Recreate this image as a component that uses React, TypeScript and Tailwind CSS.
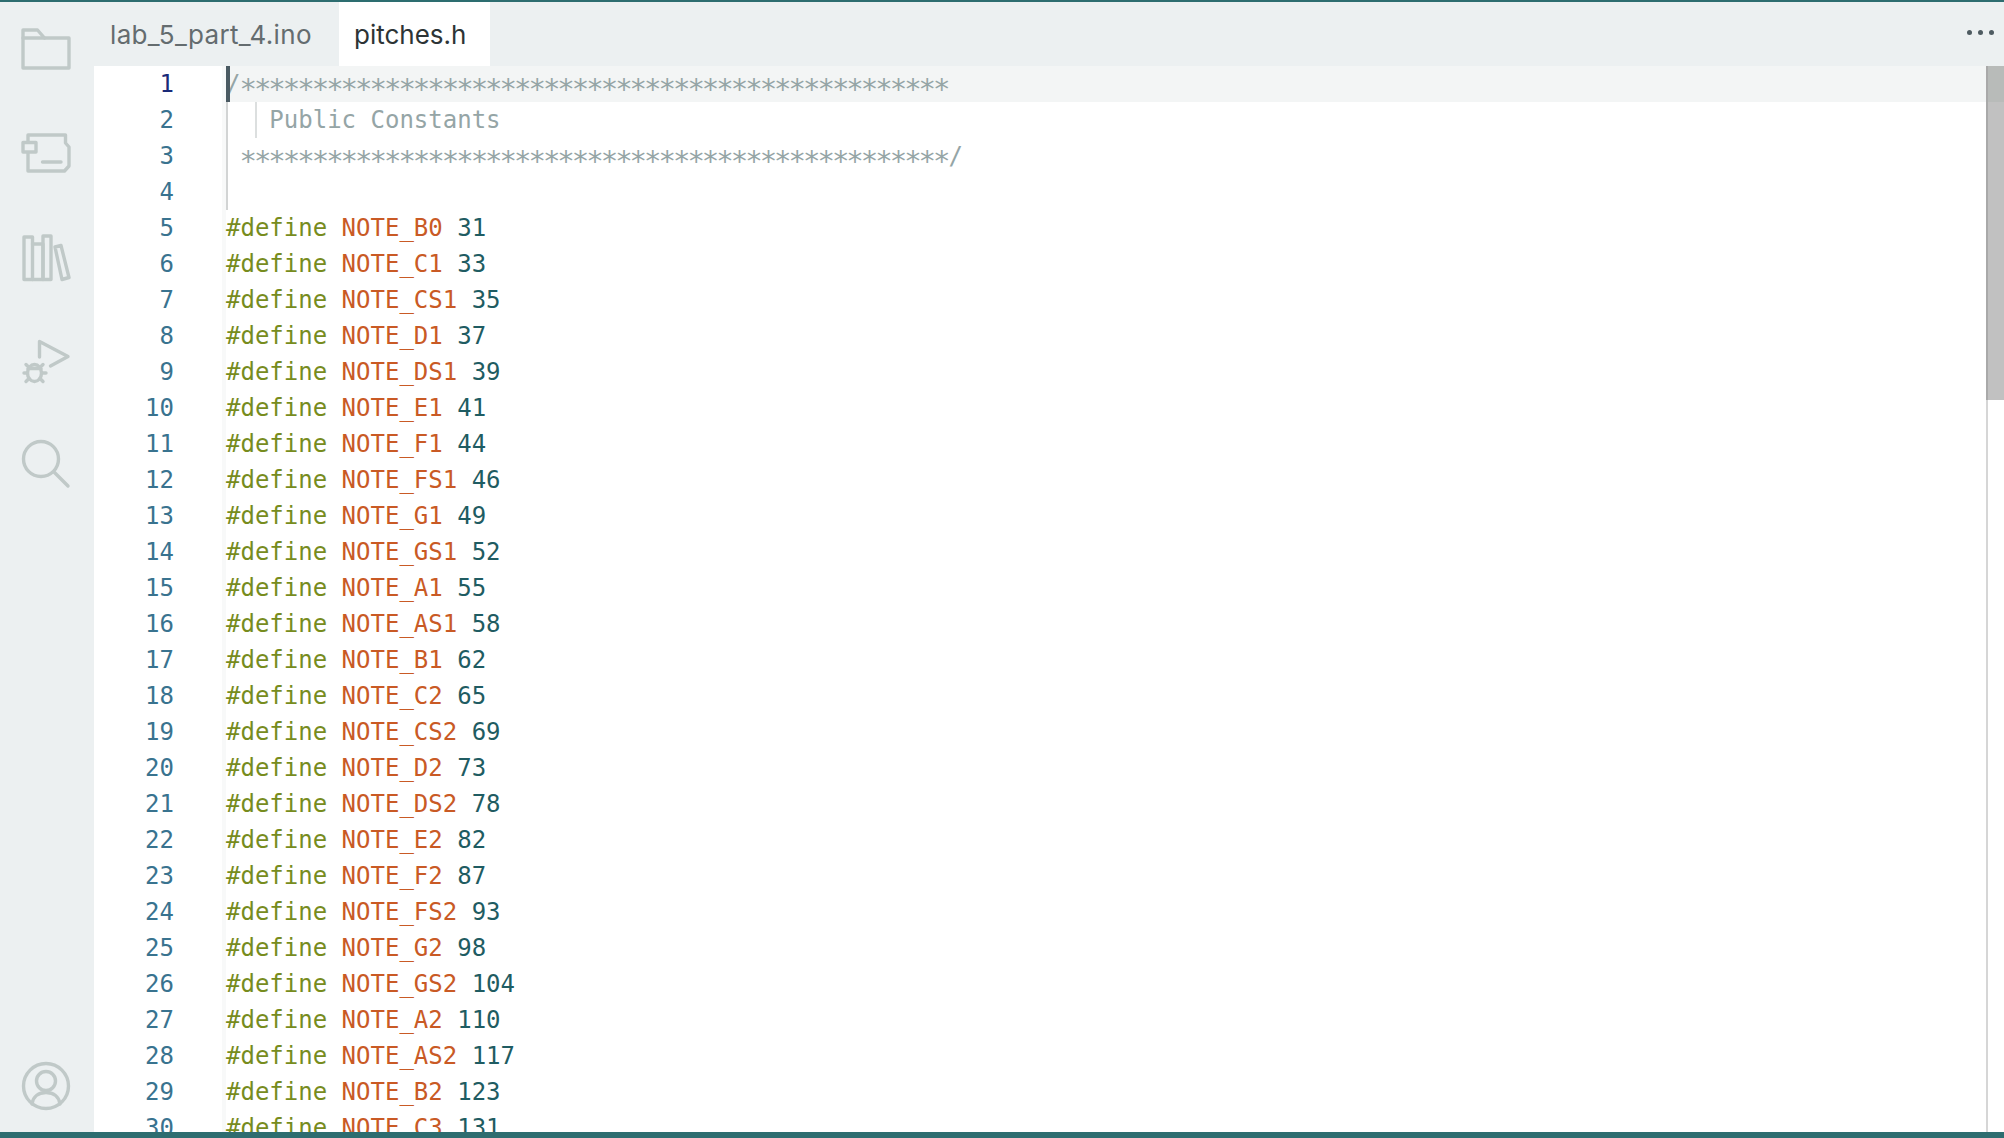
const notes: [string, number][] = [
  ["B0", 31], ["C1", 33], ["CS1", 35], ["D1", 37], ["DS1", 39], ["E1", 41], ["F1", 44], ["FS1", 46], ["G1", 49], ["GS1", 52],
  ["A1", 55], ["AS1", 58], ["B1", 62], ["C2", 65], ["CS2", 69], ["D2", 73], ["DS2", 78], ["E2", 82], ["F2", 87], ["FS2", 93],
  ["G2", 98], ["GS2", 104], ["A2", 110], ["AS2", 117], ["B2", 123], ["C3", 131],
];

const stars = "*".repeat(49);
const mono = "font-['DejaVu_Sans_Mono',monospace] text-[24px] leading-[36px] whitespace-pre";
const iconClass = "block w-[56px] h-[56px] ml-[18px] fill-none stroke-[#c0c9c8] [stroke-width:3.4] [stroke-linecap:round] [stroke-linejoin:round]";

function Sidebar() {
  return (
    <aside className="w-[94px] shrink-0 bg-[#ecf0f1] flex flex-col justify-between pt-[18px] pb-[18px]">
      <div className="flex flex-col gap-[48px]">
        <svg viewBox="18 20 56 56" className={iconClass}>
          <path d="M23 38V30H37.5L44.5 38H69V68H23Z" />
          <path d="M23 38H44.5" />
        </svg>
        <svg viewBox="18 124 56 56" className={iconClass}>
          <path d="M28 141V135H65.5V143L69 147V166L64.5 171H28V153" />
          <rect x="23" y="142.5" width="13" height="9.5" />
          <path d="M42.5 162H61" />
        </svg>
        <svg viewBox="18 228 56 56" className={iconClass}>
          <path d="M24 237H32.5V279.5H24Z" />
          <path d="M32.5 244H43V279.5H32.5" />
          <path d="M43 236H51V279.5H43Z" />
          <path d="M55 247L61 245.5L69 277.5L62 279.5Z" />
        </svg>
        <svg viewBox="18 333 56 56" className={iconClass}>
          <path d="M39.5 358V342.5L68 357.5L50.5 367" />
          <ellipse cx="34.5" cy="374" rx="7" ry="8.5" />
          <path d="M24 374H27.5M42 374H46M26 365.5L29 368.5M43 365.5L40 368.5M26 382.5L29 379.5M43 382.5L40 379.5M28 369.5H41" />
        </svg>
        <svg viewBox="18 437 56 56" className={iconClass}>
          <circle cx="41" cy="460" r="17.5" />
          <path d="M54 473L68 487" />
        </svg>
      </div>
      <svg viewBox="18 1058 56 56" className={iconClass}>
        <circle cx="46" cy="1086" r="22.5" />
        <circle cx="46" cy="1081" r="9.5" />
        <path d="M32 1104C33 1096 39 1092.5 46 1092.5C53 1092.5 59 1096 60 1104" />
      </svg>
    </aside>
  );
}

function TabBar() {
  return (
    <div className="h-[64px] shrink-0 bg-[#ecf0f1] flex items-stretch justify-between font-['Inter',sans-serif] text-[26px]">
      <div className="flex items-stretch">
        <div className="w-[245px] pl-[16px] pt-[1px] flex items-center text-[#646c6f] tracking-[0.33px]">lab_5_part_4.ino</div>
        <div className="w-[151px] pl-[15px] pt-[1px] flex items-center bg-white text-[#2d3436]">pitches.h</div>
      </div>
      <div className="flex items-center gap-[6px] pr-[10px] pb-[4px]">
        <span className="w-[5px] h-[5px] rounded-full bg-[#4e5b61]" />
        <span className="w-[5px] h-[5px] rounded-full bg-[#4e5b61]" />
        <span className="w-[5px] h-[5px] rounded-full bg-[#4e5b61]" />
      </div>
    </div>
  );
}

function Row({ n, children, active }: { n: number; children?: React.ReactNode; active?: boolean }) {
  return (
    <div className="flex h-[36px] shrink-0">
      <div className={`w-[128px] shrink-0 pr-[48px] text-right ${active ? "text-[#1a2a78]" : "text-[#39738f]"}`}>{n}</div>
      <div className="w-[4px] shrink-0 bg-[#f8f9f9]" />
      <div className={`relative flex-1 ${active ? "bg-[#f3f5f5]" : ""}`}>{children}</div>
    </div>
  );
}

function Guide() {
  return <span className="absolute left-0 top-0 h-full w-[2px] bg-[#d2d4d4]" />;
}

function Stars() {
  return <span className="relative top-[5px] -left-[1px] inline-block text-[29px] leading-[36px] tracking-[-3.01px] align-top">{stars}</span>;
}

function Editor() {
  return (
    <div className="flex-1 min-h-0 flex overflow-hidden bg-white">
      <div className={`flex-1 min-w-0 flex flex-col ${mono}`}>
        <Row n={1} active>
          <span className="absolute left-0 top-0 h-full w-[4px] bg-[#4a5a62]" />
          <span className="text-[#95a5a6]">/<Stars /></span>
        </Row>
        <Row n={2}>
          <Guide />
          <span className="absolute left-[29px] top-0 h-full w-[2px] bg-[#dcdfdf]" />
          <span className="text-[#95a5a6]">{"   Public Constants"}</span>
        </Row>
        <Row n={3}>
          <Guide />
          <span className="text-[#95a5a6]"> <Stars />/</span>
        </Row>
        <Row n={4}>
          <Guide />
        </Row>
        {notes.map(([name, value], i) => (
          <Row key={name} n={i + 5}>
            <span className="text-[#778c1e]">#define </span>
            <span className="text-[#c95a25]">NOTE_{name} </span>
            <span className="text-[#1f5c62]">{value}</span>
          </Row>
        ))}
      </div>
      <div className="w-[18px] shrink-0 border-l-2 border-[#d6d6d6]">
        <div className="h-[334px] -ml-[2px] border-l-2 border-[#a9a9a9] bg-[#c1c1c1]">
          <div className="h-[36px] bg-[#b8bbb9]" />
        </div>
      </div>
    </div>
  );
}

export default function App() {
  return (
    <div className="w-[2004px] h-[1138px] flex flex-col overflow-hidden bg-white">
      <div className="h-[2px] shrink-0 bg-[#2d6d70]" />
      <div className="flex-1 min-h-0 flex">
        <Sidebar />
        <main className="flex-1 min-w-0 flex flex-col">
          <TabBar />
          <Editor />
        </main>
      </div>
      <div className="h-[6px] shrink-0 bg-[#2d6d70]" />
    </div>
  );
}
